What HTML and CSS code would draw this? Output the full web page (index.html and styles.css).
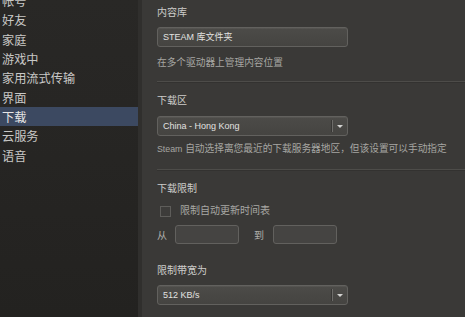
FILE: index.html
```html
<!DOCTYPE html>
<html lang="zh-CN">
<head>
<meta charset="utf-8">
<title>设置 - 下载</title>
<link rel="stylesheet" href="styles.css">
</head>
<body>
<div class="window">
  <nav class="sidebar">
    <ul class="nav-list">
      <li class="nav-item">帐号</li>
      <li class="nav-item">好友</li>
      <li class="nav-item">家庭</li>
      <li class="nav-item">游戏中</li>
      <li class="nav-item">家用流式传输</li>
      <li class="nav-item">界面</li>
      <li class="nav-item active">下载</li>
      <li class="nav-item">云服务</li>
      <li class="nav-item">语音</li>
    </ul>
  </nav>
  <div class="divider-strip"></div>
  <main class="content">
    <div class="label first">内容库</div>
    <div class="field button-field">STEAM 库文件夹</div>
    <div class="desc d1">在多个驱动器上管理内容位置</div>
    <hr class="sep s1">
    <div class="label l2">下载区</div>
    <div class="field select">
      <span class="select-text">China - Hong Kong</span>
      <span class="select-arrow"><span class="tri"></span></span>
    </div>
    <div class="desc d2"><span class="latin">Steam</span> 自动选择离您最近的下载服务器地区，但该设置可以手动指定</div>
    <hr class="sep s2">
    <div class="label l3">下载限制</div>
    <div class="check-row">
      <span class="checkbox"></span>
      <span class="check-label">限制自动更新时间表</span>
    </div>
    <div class="time-row">
      <span class="time-label">从</span>
      <span class="time-box"></span>
      <span class="time-label to">到</span>
      <span class="time-box"></span>
    </div>
    <div class="label l4">限制带宽为</div>
    <div class="field select s-bw">
      <span class="select-text">512 KB/s</span>
      <span class="select-arrow"><span class="tri"></span></span>
    </div>
  </main>
</div>
</body>
</html>
```
FILE: styles.css
```css
* { box-sizing: border-box; }
html, body {
  margin: 0;
  padding: 0;
  width: 465px;
  height: 317px;
  overflow: hidden;
  background: #393836;
  font-family: "Liberation Sans", "Noto Sans CJK SC", sans-serif;
}
.window {
  display: flex;
  width: 465px;
  height: 317px;
}
.sidebar {
  width: 138px;
  flex: none;
  height: 100%;
  background: linear-gradient(#292826, #232220);
  overflow: hidden;
}
.nav-list {
  list-style: none;
  margin: -9px 0 0 0;
  padding: 0;
}
.nav-item {
  height: 19.33px;
  line-height: 22px;
  padding-left: 2px;
  font-size: 12.2px;
  color: #c8c8c6;
  white-space: nowrap;
}
.nav-item.active {
  background: #3c4961;
  color: #e6e6e6;
}
.divider-strip {
  width: 4px;
  flex: none;
  background: #302f2d;
}
.content {
  flex: 1;
  display: flex;
  flex-direction: column;
  align-items: flex-start;
  padding: 6px 0 0 15px;
  background: #3a3937;
  min-width: 0;
}
.label {
  font-size: 10px;
  line-height: 14px;
  height: 14px;
  color: #cdcdcb;
  white-space: nowrap;
}
.desc {
  font-size: 9.7px;
  line-height: 14px;
  height: 14px;
  color: #a6a6a2;
  white-space: nowrap;
}
.latin { font-size: 8.8px; }
.field {
  width: 191px;
  height: 20px;
  border: 1px solid #62615e;
  border-radius: 3px;
  background: linear-gradient(#4c4b48, #454441);
  color: #e2e2e0;
  font-size: 9px;
  line-height: 18px;
  padding-left: 5px;
  white-space: nowrap;
  box-shadow: inset 0 1px 0 rgba(255,255,255,0.05);
}
.button-field { margin-top: 7px; }
.d1 { margin-top: 9px; }
.sep {
  align-self: stretch;
  border: 0;
  margin: 11px 0 0 0;
  background: #4d4c49;
  border-bottom: 1px solid #333230;
  height: 2px;
}
.l2 { margin-top: 11px; }
.select {
  display: flex;
  margin-top: 8px;
  padding-left: 0;
}
.select-text {
  flex: 1;
  padding-left: 5px;
}
.select-arrow {
  width: 15px;
  flex: none;
  display: flex;
  align-items: center;
  justify-content: center;
  border-left: 1px solid #6d6c69;
  margin: 3px 0;
  box-shadow: -1px 0 0 #383735;
}
.tri {
  width: 0;
  height: 0;
  border-left: 3px solid transparent;
  border-right: 3px solid transparent;
  border-top: 3px solid #d4d4d2;
}
.d2 { margin-top: 6px; }
.s2 { margin-top: 13px; }
.l3 { margin-top: 11px; }
.check-row {
  display: flex;
  align-items: center;
  margin-top: 8px;
  height: 14px;
  padding-left: 3px;
}
.checkbox {
  width: 11px;
  height: 11px;
  border: 1px solid #5e5d5a;
  background: #3d3c3a;
  margin-right: 9px;
  flex: none;
}
.check-label {
  font-size: 10px;
  line-height: 14px;
  color: #a8a8a4;
  white-space: nowrap;
}
.time-row {
  display: flex;
  align-items: center;
  margin-top: 7px;
  height: 19px;
}
.time-label {
  font-size: 10px;
  color: #b0b0ac;
  width: 18px;
}
.time-label.to {
  margin-left: 15px;
  width: 19px;
}
.time-box {
  width: 64px;
  height: 19px;
  border: 1px solid #62615e;
  border-radius: 3px;
  background: #454442;
}
.l4 { margin-top: 20px; }
.s-bw { margin-top: 7px; }
```
